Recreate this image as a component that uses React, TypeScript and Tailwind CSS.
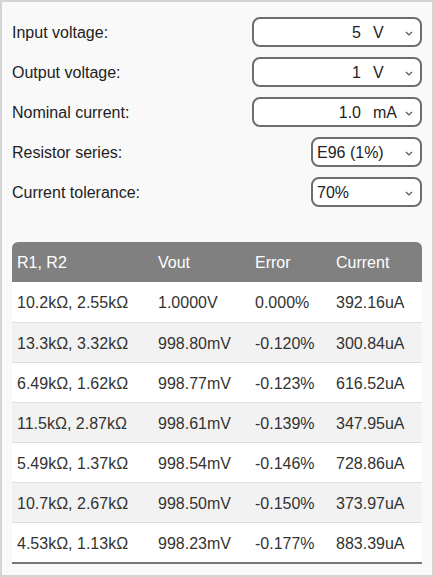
const inputs: { label: string; value: string; unit?: string; narrow?: boolean }[] = [
  { label: "Input voltage:", value: "5", unit: "V" },
  { label: "Output voltage:", value: "1", unit: "V" },
  { label: "Nominal current:", value: "1.0", unit: "mA" },
  { label: "Resistor series:", value: "E96 (1%)", narrow: true },
  { label: "Current tolerance:", value: "70%", narrow: true },
];

const results = [
  ["10.2kΩ, 2.55kΩ", "1.0000V", "0.000%", "392.16uA"],
  ["13.3kΩ, 3.32kΩ", "998.80mV", "-0.120%", "300.84uA"],
  ["6.49kΩ, 1.62kΩ", "998.77mV", "-0.123%", "616.52uA"],
  ["11.5kΩ, 2.87kΩ", "998.61mV", "-0.139%", "347.95uA"],
  ["5.49kΩ, 1.37kΩ", "998.54mV", "-0.146%", "728.86uA"],
  ["10.7kΩ, 2.67kΩ", "998.50mV", "-0.150%", "373.97uA"],
  ["4.53kΩ, 1.13kΩ", "998.23mV", "-0.177%", "883.39uA"],
];

function Chevron() {
  return (
    <svg viewBox="0 0 8 5" className="h-[5px] w-[8px] shrink-0" fill="none" stroke="#555" strokeWidth="1.1">
      <polyline points="1,1 4,4 7,1" />
    </svg>
  );
}

function Picker({ value, unit, narrow }: { value: string; unit?: string; narrow?: boolean }) {
  return (
    <div
      className={`flex h-[30px] items-center rounded-[8px] border-2 border-[#6e6e6e] bg-white pr-[7px] text-[16px] text-[#222] ${
        narrow ? "w-[111px] pl-[4px]" : "w-[170px]"
      }`}
    >
      {unit ? (
        <>
          <span className="flex-1 pt-[2px] text-right">{value}</span>
          <span className="w-[40px] shrink-0 pl-[12px] pt-[2px]">{unit}</span>
        </>
      ) : (
        <span className="flex-1 pt-[2px]">{value}</span>
      )}
      <span className="ml-[4px] flex w-[8px] justify-center pt-[2px]">
        <Chevron />
      </span>
    </div>
  );
}

export default function App() {
  return (
    <div
      className="h-[577px] w-[434px] border-2 border-[#d4d4d4] bg-[#f9f9f9] px-[10px] pt-[10px] text-[#222]"
      style={{ fontFamily: '"Liberation Sans", Arial, sans-serif' }}
    >
      {inputs.map((row) => (
        <div key={row.label} className="flex h-[40px] items-center justify-between text-[16px]">
          <span className="pt-[2px]">{row.label}</span>
          <Picker value={row.value} unit={row.unit} narrow={row.narrow} />
        </div>
      ))}

      <div className="mt-[30px] border-b-2 border-[#777] text-[16px]">
        <div className="grid h-[40px] grid-cols-[141px_97px_81px_91px] items-center rounded-t-[6px] bg-[#808080] text-white">
          <span className="pl-[5px] pt-[2px]">R1, R2</span>
          <span className="pl-[5px] pt-[2px]">Vout</span>
          <span className="pl-[5px] pt-[2px]">Error</span>
          <span className="pl-[5px] pt-[2px]">Current</span>
        </div>
        {results.map((r, i) => (
          <div
            key={r[0]}
            className={`grid h-[40px] grid-cols-[141px_97px_81px_91px] items-center text-[#333] ${
              i % 2 === 1 ? "bg-[#f2f2f2]" : "bg-white"
            } ${i > 0 ? "border-t border-[#dddddd]" : ""}`}
          >
            {r.map((c, j) => (
              <span key={j} className="pl-[5px] pt-[2px]">
                {c}
              </span>
            ))}
          </div>
        ))}
      </div>
    </div>
  );
}
